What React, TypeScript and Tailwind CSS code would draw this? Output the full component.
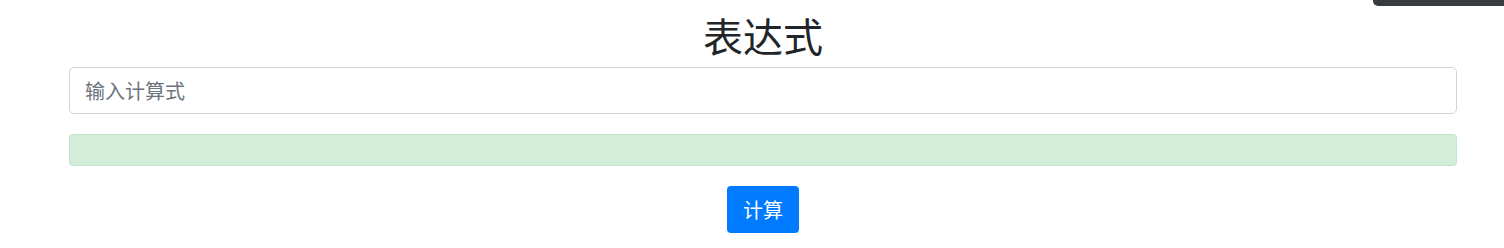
import React from "react";

const App = () => {
  return (
    <div
      className="relative w-[1504px] h-[248px] bg-white text-[#212529]"
      style={{ fontFamily: '"Noto Sans CJK SC", "Liberation Sans", sans-serif' }}
    >
      {/* dark strip peeking in at the top right */}
      <div className="absolute top-0 right-0 w-[131px] h-[6px] bg-[#383b40] rounded-bl-[5px]" />

      <div className="ml-[69px] w-[1388px] flex flex-col">
        <h1 className="text-center text-[40px] leading-[48px] font-normal mt-[11px] mb-[8px]">
          表达式
        </h1>

        <input
          type="text"
          placeholder="输入计算式"
          className="h-[47px] w-full px-[15px] text-[20px] text-[#495057] border border-[#ced4da] rounded-[5px] outline-none placeholder:text-[#6c757d]"
        />

        <div className="mt-[20px] h-[32px] w-full bg-[#d4edda] border border-[#c3e6cb] rounded-[4px]" />

        <div className="flex justify-center mt-[20px]">
          <button className="h-[47px] w-[72px] bg-[#007bff] text-white text-[20px] rounded-[4px]">
            计算
          </button>
        </div>
      </div>
    </div>
  );
};

export default App;
